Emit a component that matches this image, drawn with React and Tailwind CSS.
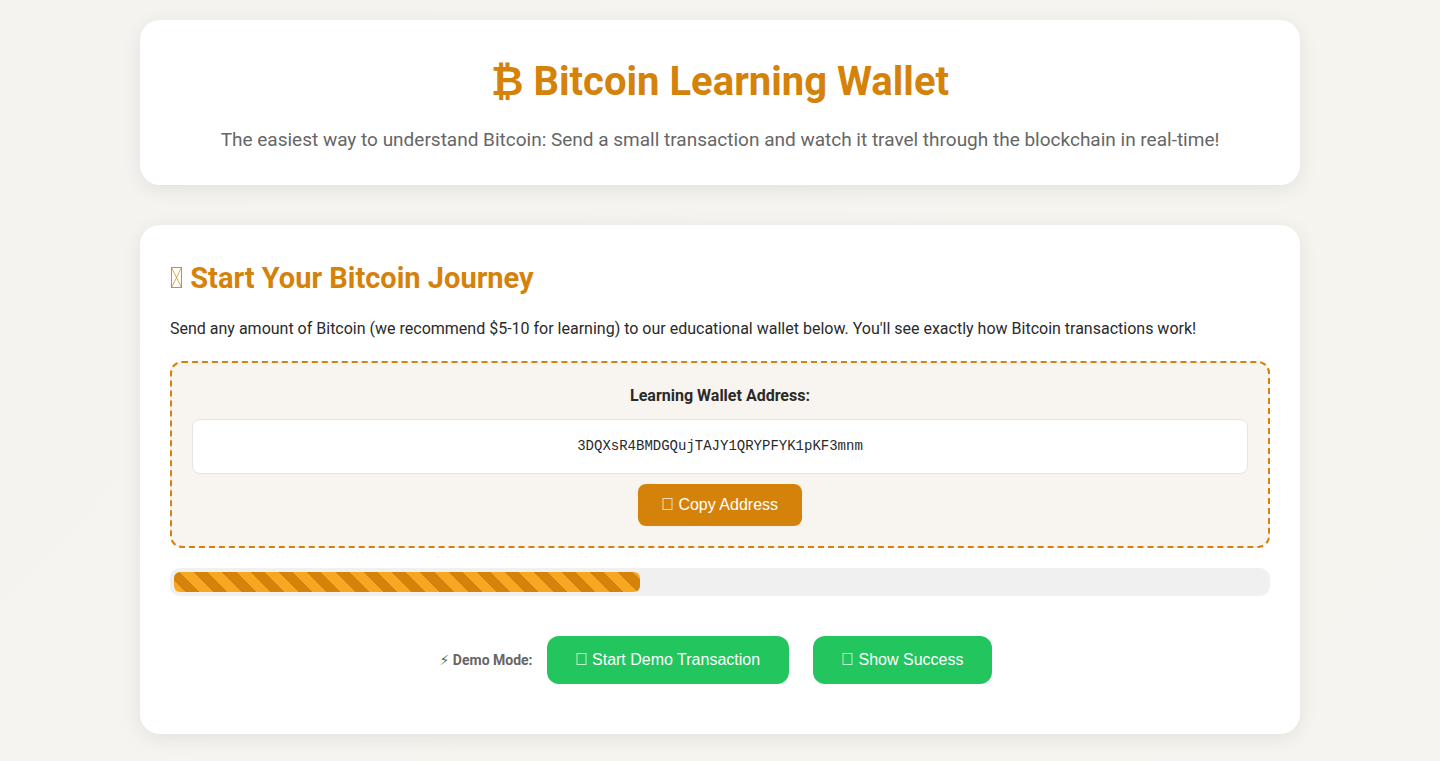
import React from 'react';

const WALLET_ADDRESS = '3DQXsR4BMDGQujTAJY1QRYPFYK1pKF3mnm';

function BoxIcon() {
    return (
        <svg aria-hidden="true" viewBox="0 0 12 12" className="inline size-3 align-baseline" fill="none">
            <rect x="1" y="0.5" width="9" height="11" stroke="currentColor" strokeOpacity="0.7" />
        </svg>
    );
}

function CrossedBoxIcon() {
    return (
        <svg aria-hidden="true" viewBox="0 0 13 22" className="inline h-[22px] w-[13px] align-baseline" fill="none">
            <rect x="1.5" y="1.5" width="10" height="20" stroke="currentColor" strokeOpacity="0.9" />
            <path d="M1.5 1.5 11.5 21.5M11.5 1.5 1.5 21.5" stroke="currentColor" strokeOpacity="0.7" />
        </svg>
    );
}

function Card({ as: Tag = 'section', className = '', children }) {
    return (
        <Tag className={`mb-10 rounded-[20px] bg-white p-[30px] shadow-[0_4px_20px_rgba(0,0,0,0.08)] ${className}`}>
            {children}
        </Tag>
    );
}

function DemoButton({ onClick, children }) {
    return (
        <button
            type="button"
            onClick={onClick}
            className="h-12 cursor-pointer rounded-xl bg-[#22c55e] px-[29px] font-['Liberation_Sans',sans-serif] text-base text-white hover:bg-[#16a34a]"
        >
            <BoxIcon /> {children}
        </button>
    );
}

function ProgressBar({ value }) {
    return (
        <div
            role="progressbar"
            aria-label="Transaction progress"
            aria-valuenow={value}
            aria-valuemin={0}
            aria-valuemax={100}
            className="my-5 rounded-[10px] bg-[#f0f0f0] p-1"
        >
            <div
                className="h-5 rounded-md bg-[repeating-linear-gradient(45deg,#f7a823_0px,#f7a823_8px,#d4820a_8px,#d4820a_18px,#f7a823_18px,#f7a823_20px)]"
                style={{ width: `${value}%` }}
            />
        </div>
    );
}

export default function App() {
    const [progress, setProgress] = React.useState(42.7);

    function copyAddress() {
        navigator.clipboard.writeText(WALLET_ADDRESS);
    }

    return (
        <div className="min-h-screen bg-[linear-gradient(135deg,#f5f3ef_0%,#f5f5f0_100%)] font-[Roboto,sans-serif] text-base leading-[26px] text-[#2a2a2a]">
            <div className="mx-auto max-w-[1200px] p-5">
                {/* Header */}
                <Card as="header" className="text-center">
                    <h1 className="mb-[10px] text-[40px] leading-16 font-bold text-[#d4820a]">
                        ₿ Bitcoin Learning Wallet
                    </h1>
                    <p className="text-[19px] leading-[31px] text-[#666]">
                        The easiest way to understand Bitcoin: Send a small transaction and watch it travel
                        through the blockchain in real-time!
                    </p>
                </Card>

                {/* Wallet */}
                <Card>
                    <h2 className="mb-[15px] text-[29px] leading-[46px] font-bold text-[#d4820a]">
                        <CrossedBoxIcon /> Start Your Bitcoin Journey
                    </h2>
                    <p className="leading-[25px]">
                        Send any amount of Bitcoin (we recommend $5-10 for learning) to our educational
                        wallet below. You'll see exactly how Bitcoin transactions work!
                    </p>

                    <div className="my-5 rounded-xl border-2 border-dashed border-[#d4820a] bg-[#f8f4ef] p-5 text-center">
                        <strong className="block font-bold">Learning Wallet Address:</strong>
                        <div className="my-[10px] rounded-lg border border-[#e5e5e5] bg-white p-[15px] font-['Liberation_Mono',monospace] text-sm leading-[23px] break-all">
                            {WALLET_ADDRESS}
                        </div>
                        <button
                            type="button"
                            onClick={copyAddress}
                            className="mx-auto block h-[42px] cursor-pointer rounded-lg bg-[#d4820a] px-6 font-['Liberation_Sans',sans-serif] text-base text-white hover:bg-[#b8700a]"
                        >
                            <BoxIcon /> Copy Address
                        </button>
                    </div>

                    <ProgressBar value={progress} />

                    {/* Demo controls */}
                    <div className="mt-10 mb-5 flex flex-wrap items-center justify-center gap-6 pr-2">
                        <div className="flex items-center gap-[14px]">
                            <span className="font-[Roboto,'DejaVu_Sans',sans-serif] text-sm font-bold text-[#666]">
                                {'⚡\uFE0E'} Demo Mode:
                            </span>
                            <DemoButton onClick={() => setProgress(25)}>Start Demo Transaction</DemoButton>
                        </div>
                        <DemoButton onClick={() => setProgress(100)}>Show Success</DemoButton>
                    </div>
                </Card>

                {/* Transaction details */}
                <Card className="min-h-40" />
            </div>
        </div>
    );
}
